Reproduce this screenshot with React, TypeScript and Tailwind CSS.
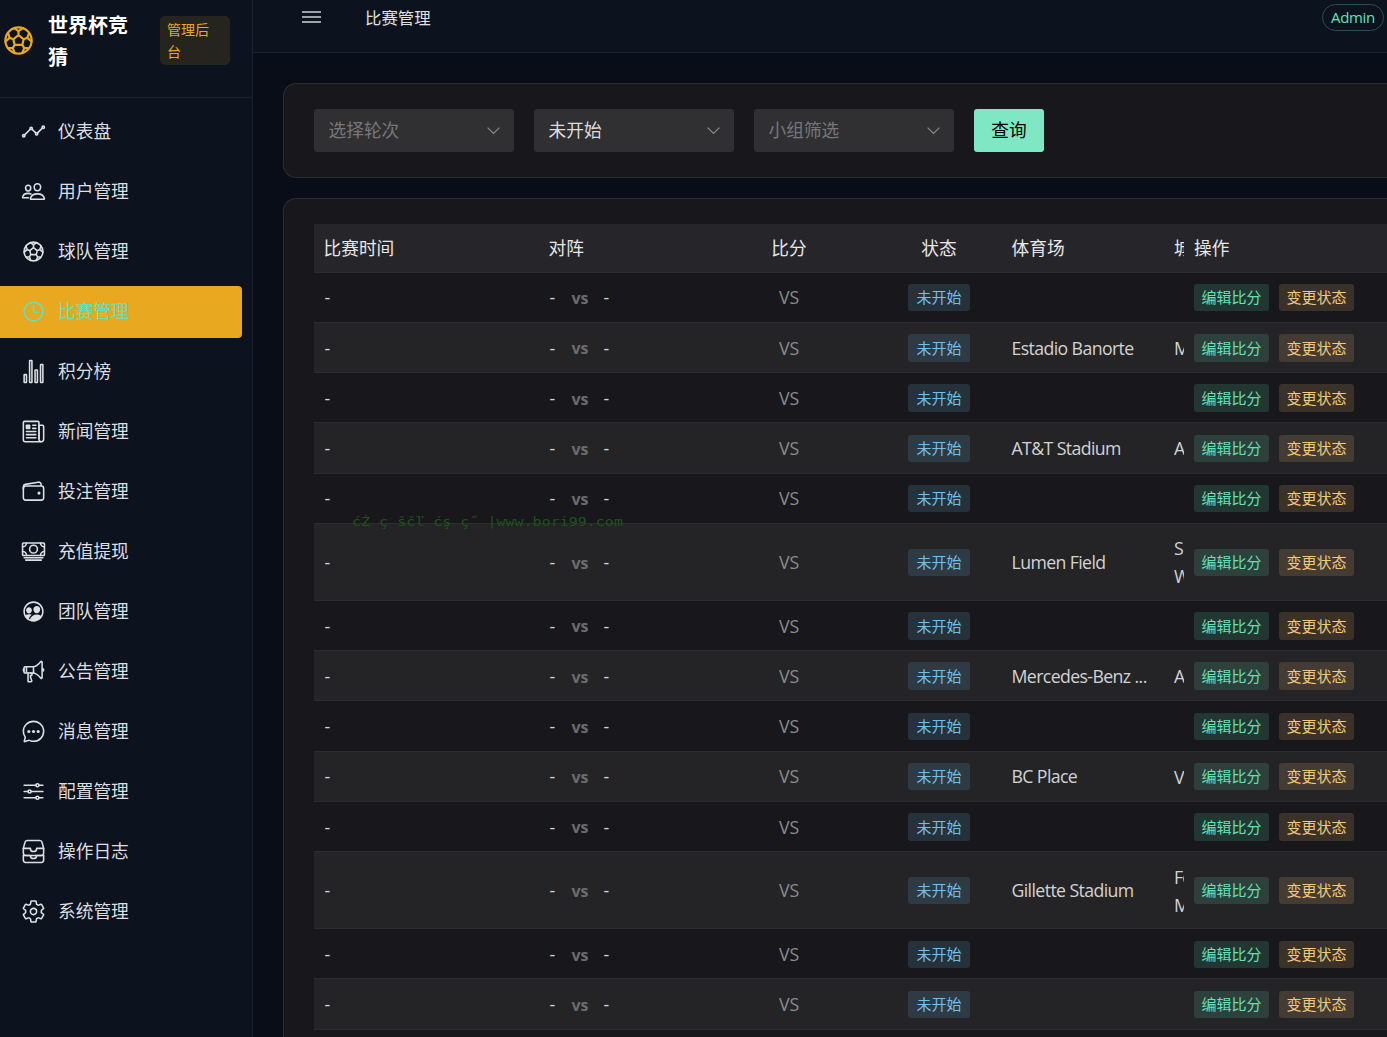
import React from 'react';
import clsx from 'clsx';
import type { IconType } from 'react-icons';
import {
  IoAnalyticsOutline,
  IoCashOutline,
  IoChatbubbleEllipsesOutline,
  IoFileTrayStackedOutline,
  IoFootballOutline,
  IoMegaphoneOutline,
  IoNewspaperOutline,
  IoOptionsOutline,
  IoPeopleCircleOutline,
  IoPeopleOutline,
  IoSettingsOutline,
  IoStatsChartOutline,
  IoTimeOutline,
  IoWalletOutline,
} from 'react-icons/io5';

interface MenuItem {
  label: string;
  icon: IconType;
  active?: boolean;
}

interface Match {
  stadium?: string;
  city?: string[];
}

const menu: MenuItem[] = [
  { label: '仪表盘', icon: IoAnalyticsOutline },
  { label: '用户管理', icon: IoPeopleOutline },
  { label: '球队管理', icon: IoFootballOutline },
  { label: '比赛管理', icon: IoTimeOutline, active: true },
  { label: '积分榜', icon: IoStatsChartOutline },
  { label: '新闻管理', icon: IoNewspaperOutline },
  { label: '投注管理', icon: IoWalletOutline },
  { label: '充值提现', icon: IoCashOutline },
  { label: '团队管理', icon: IoPeopleCircleOutline },
  { label: '公告管理', icon: IoMegaphoneOutline },
  { label: '消息管理', icon: IoChatbubbleEllipsesOutline },
  { label: '配置管理', icon: IoOptionsOutline },
  { label: '操作日志', icon: IoFileTrayStackedOutline },
  { label: '系统管理', icon: IoSettingsOutline },
];

const matches: Match[] = [
  {},
  { stadium: 'Estadio Banorte', city: ['M'] },
  {},
  { stadium: 'AT&T Stadium', city: ['A'] },
  {},
  { stadium: 'Lumen Field', city: ['S', 'W'] },
  {},
  { stadium: 'Mercedes-Benz ...', city: ['A'] },
  {},
  { stadium: 'BC Place', city: ['V'] },
  {},
  { stadium: 'Gillette Stadium', city: ['Fo', 'M'] },
  {},
  {},
  {},
];

const columns = 'grid grid-cols-[225px_162.5px_175px_125px_162.5px_20px_1fr] items-center';

const Sidebar = () => (
  <aside className="w-[253px] shrink-0 border-r border-[#1b202d] bg-[#0c121e]">
    <div className="flex h-[98px] items-start border-b border-[#1b202d] pl-px">
      <IoFootballOutline className="mt-[23px] size-[35px] shrink-0 text-[#e8a820]" />
      <h1 className="mt-[10px] ml-3 w-[92px] text-[20px] leading-8 font-bold text-white">
        世界杯竞猜
      </h1>
      <span className="mt-4 ml-5 h-[49px] w-[70px] rounded-[5px] bg-[#26241f] py-[2.5px] pr-2 pl-[7px] text-[14px] leading-[22px] text-[#e8a820]">
        管理后台
      </span>
    </div>
    <nav className="flex flex-col gap-2 pt-2">
      {menu.map(({ label, icon: Icon, active }) => (
        <a
          key={label}
          className={clsx(
            'mr-[10px] flex h-[52px] items-center gap-3 rounded-r pb-[2px] pl-[21px]',
            active ? 'bg-[#e8a820] text-[#63e2b7]' : 'text-[#dddfe2]',
          )}
        >
          <Icon className="size-[25px]" />
          <span>{label}</span>
        </a>
      ))}
    </nav>
  </aside>
);

const Topbar = () => (
  <header className="flex h-[53px] items-start border-b border-[#1b202d] bg-[#0c131f] pl-[49px]">
    <svg className="mt-[11px] h-3 w-[19px] text-[#d0d2d6]" viewBox="0 0 19 12" stroke="currentColor">
      <path d="M0 1h19M0 6h19M0 11h19" strokeWidth="1.5" />
    </svg>
    <span className="mt-[5px] ml-11 text-[16.4px] leading-[26px] text-[#e0e1e3]">比赛管理</span>
    <span className="mt-1 mr-[3px] ml-auto flex h-[27px] w-[62px] items-center justify-center rounded-full border border-[#26514f] text-[15px] tracking-[-0.3px] text-[#63e2b7]">
      Admin
    </span>
  </header>
);

const Select = ({ text, placeholder }: { text: string; placeholder?: boolean }) => (
  <div className="flex h-[43px] w-[200px] items-center justify-between rounded-[3px] bg-[#303032] pr-[14px] pl-[14.5px]">
    <span className={placeholder ? 'text-[#77777a]' : 'text-[#dcdcdd]'}>{text}</span>
    <svg className="h-2 w-[13px] text-[#8a8a8c]" viewBox="0 0 13 8" fill="none" stroke="currentColor">
      <path d="M.6 .6l5.9 5.9L12.4 .6" strokeWidth="1.2" />
    </svg>
  </div>
);

const FilterCard = () => (
  <section className="flex h-[95px] items-center gap-5 rounded-l-[13px] border border-r-0 border-[#2d2d30] bg-[#18181c] pl-[30px]">
    <Select text="选择轮次" placeholder />
    <Select text="未开始" />
    <Select text="小组筛选" placeholder />
    <button className="h-[43px] w-[70px] rounded-[3px] bg-[#7fe7c4] text-black">查询</button>
  </section>
);

const MatchRow = ({ match, striped }: { match: Match; striped: boolean }) => (
  <div
    className={clsx(
      columns,
      'border-b border-[#2d2d30] pt-px text-[#d3d3d4]',
      striped ? 'bg-[#242426]' : 'bg-[#18181c]',
      match.city && match.city.length > 1 ? 'h-[77.1px]' : 'h-[50.25px]',
    )}
  >
    <span className="pl-[10.5px]">-</span>
    <span className="flex items-center pl-[10.5px]">
      <span className="w-[22px]">-</span>
      <b className="w-8 pt-px text-[16px] text-[#6b6b6d]">vs</b>
      <span>-</span>
    </span>
    <span className="text-center text-[#8b8b8d]">VS</span>
    <span className="flex justify-center">
      <span
        className={clsx(
          'flex h-[27.5px] w-[62px] items-center justify-center rounded-[3px] text-[15px] text-[#70c0e8]',
          striped ? 'bg-[#2f3b44]' : 'bg-[#25323b]',
        )}
      >
        未开始
      </span>
    </span>
    <span className="pl-[10px] tracking-[-0.6px] whitespace-nowrap">{match.stadium}</span>
    <span className="flex flex-col overflow-hidden pl-[10px] leading-7 tracking-[-0.8px]">
      {match.city?.map((line) => <span key={line}>{line}</span>)}
    </span>
    <span className="flex gap-[10px] pl-[10px] text-[15px]">
      <button
        className={clsx(
          'h-[27.5px] w-[75px] rounded-[3px] text-[#63e2b7]',
          striped ? 'bg-[#2d403b]' : 'bg-[#233732]',
        )}
      >
        编辑比分
      </button>
      <button
        className={clsx(
          'h-[27.5px] w-[75px] rounded-[3px] text-[#f2c97d]',
          striped ? 'bg-[#443c32]' : 'bg-[#3a3229]',
        )}
      >
        变更状态
      </button>
    </span>
  </div>
);

const MatchTable = () => (
  <section className="relative rounded-tl-[13px] border-t border-l border-[#2d2d30] bg-[#18181c] pt-[25px] pl-[30px]">
    <div className={clsx(columns, 'h-[48.5px] border-b border-[#2d2d30] bg-[#26262a] pt-[1.5px] text-[#e8e8e9]')}>
      <span className="pl-[9.5px]">比赛时间</span>
      <span className="pl-[9.5px]">对阵</span>
      <span className="text-center">比分</span>
      <span className="text-center">状态</span>
      <span className="pl-[10px]">体育场</span>
      <span className="overflow-hidden pl-[10px] whitespace-nowrap">城</span>
      <span className="pl-[10px]">操作</span>
    </div>
    {matches.map((match, i) => (
      <MatchRow key={i} match={match} striped={i % 2 === 1} />
    ))}
    <span className="absolute top-[313px] left-[68px] origin-center scale-y-[0.86] font-['DejaVu_Sans_Mono'] text-[15px] leading-5 whitespace-pre text-[#1e5218]">
      ćŻ ç ščľ ćş ç˝ |www.bori99.com
    </span>
  </section>
);

export default function App() {
  return (
    <div className="flex h-screen overflow-hidden bg-[#080d18] font-['Open_Sans','Noto_Sans_CJK_SC',sans-serif] text-[17.7px]">
      <Sidebar />
      <div className="min-w-0 flex-1">
        <Topbar />
        <main className="flex flex-col gap-5 pt-[30px] pl-[30px]">
          <FilterCard />
          <MatchTable />
        </main>
      </div>
    </div>
  );
}
